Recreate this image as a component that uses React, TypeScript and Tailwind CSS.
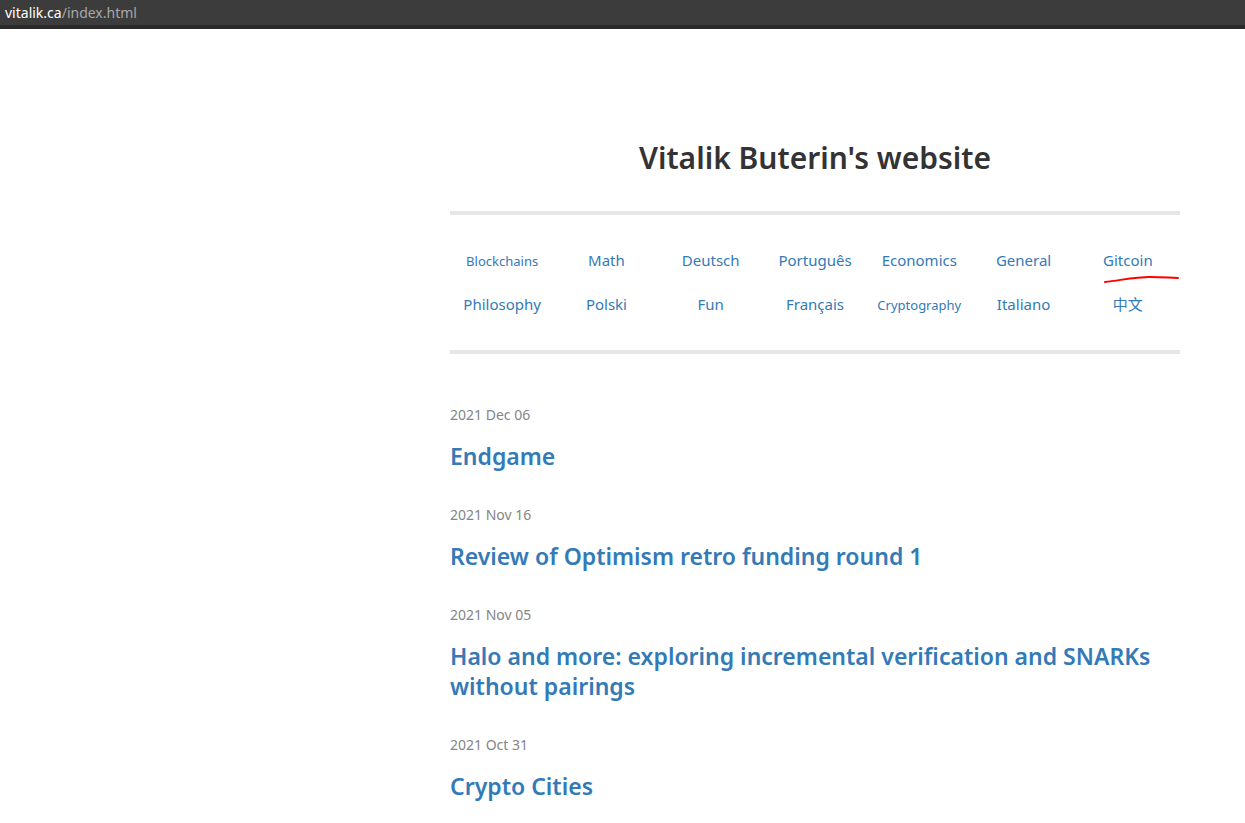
const nav: { label: string; small?: boolean }[] = [
  { label: 'Blockchains', small: true },
  { label: 'Math' },
  { label: 'Deutsch' },
  { label: 'Português' },
  { label: 'Economics' },
  { label: 'General' },
  { label: 'Gitcoin' },
  { label: 'Philosophy' },
  { label: 'Polski' },
  { label: 'Fun' },
  { label: 'Français' },
  { label: 'Cryptography', small: true },
  { label: 'Italiano' },
  { label: '中文' },
]

const posts = [
  { date: '2021 Dec 06', title: 'Endgame' },
  { date: '2021 Nov 16', title: 'Review of Optimism retro funding round 1' },
  {
    date: '2021 Nov 05',
    title: 'Halo and more: exploring incremental verification and SNARKs without pairings',
  },
  { date: '2021 Oct 31', title: 'Crypto Cities' },
]

const font = { fontFamily: '"Noto Sans", "Noto Sans CJK SC", sans-serif' }

export default function App() {
  return (
    <div className="min-h-screen bg-white" style={font}>
      <div className="flex h-[25px] items-center bg-[#3c3c3c] px-[5px] text-[14px] leading-none">
        <span className="text-white">vitalik.ca</span>
        <span className="text-[#a8a8a8]">/index.html</span>
      </div>
      <div className="h-[4px] bg-[#2a2a2a]" />

      <main className="ml-[450px] w-[730px] pb-10">
        <h1 className="mt-[111px] text-center text-[30px] font-semibold leading-[35px] text-[#333]">
          Vitalik Buterin's website
        </h1>
        <hr className="mt-[36px] h-[4px] border-0 bg-[#e6e6e6]" />

        <div className="relative grid grid-cols-7 pt-[23px] pb-[24px]">
          {nav.map((n) => (
            <a
              key={n.label}
              className={`flex h-[44px] items-center justify-center text-[#337ab7] ${
                n.small ? 'pt-[3px] text-[13px]' : 'text-[15px]'
              }`}
            >
              {n.label}
            </a>
          ))}
          {/* red hand-drawn mark under Gitcoin */}
          <svg
            className="absolute left-[654px] top-[59px]"
            width="80"
            height="12"
            viewBox="0 0 80 12"
          >
            <path
              d="M1 8 C 18 6, 32 3, 46 3 S 66 4, 74 4"
              fill="none"
              stroke="#ff0000"
              strokeWidth="2"
              strokeLinecap="round"
            />
          </svg>
        </div>
        <hr className="h-[4px] border-0 bg-[#e6e6e6]" />

        <div className="mt-[51px] flex flex-col gap-[34px]">
          {posts.map((p) => (
            <div key={p.title}>
              <p className="text-[14px] leading-[20px] text-[#858585]">{p.date}</p>
              <a className="mt-[16px] block text-[23px] font-semibold leading-[30px] text-[#337ab7]">
                {p.title}
              </a>
            </div>
          ))}
        </div>
      </main>
    </div>
  )
}
